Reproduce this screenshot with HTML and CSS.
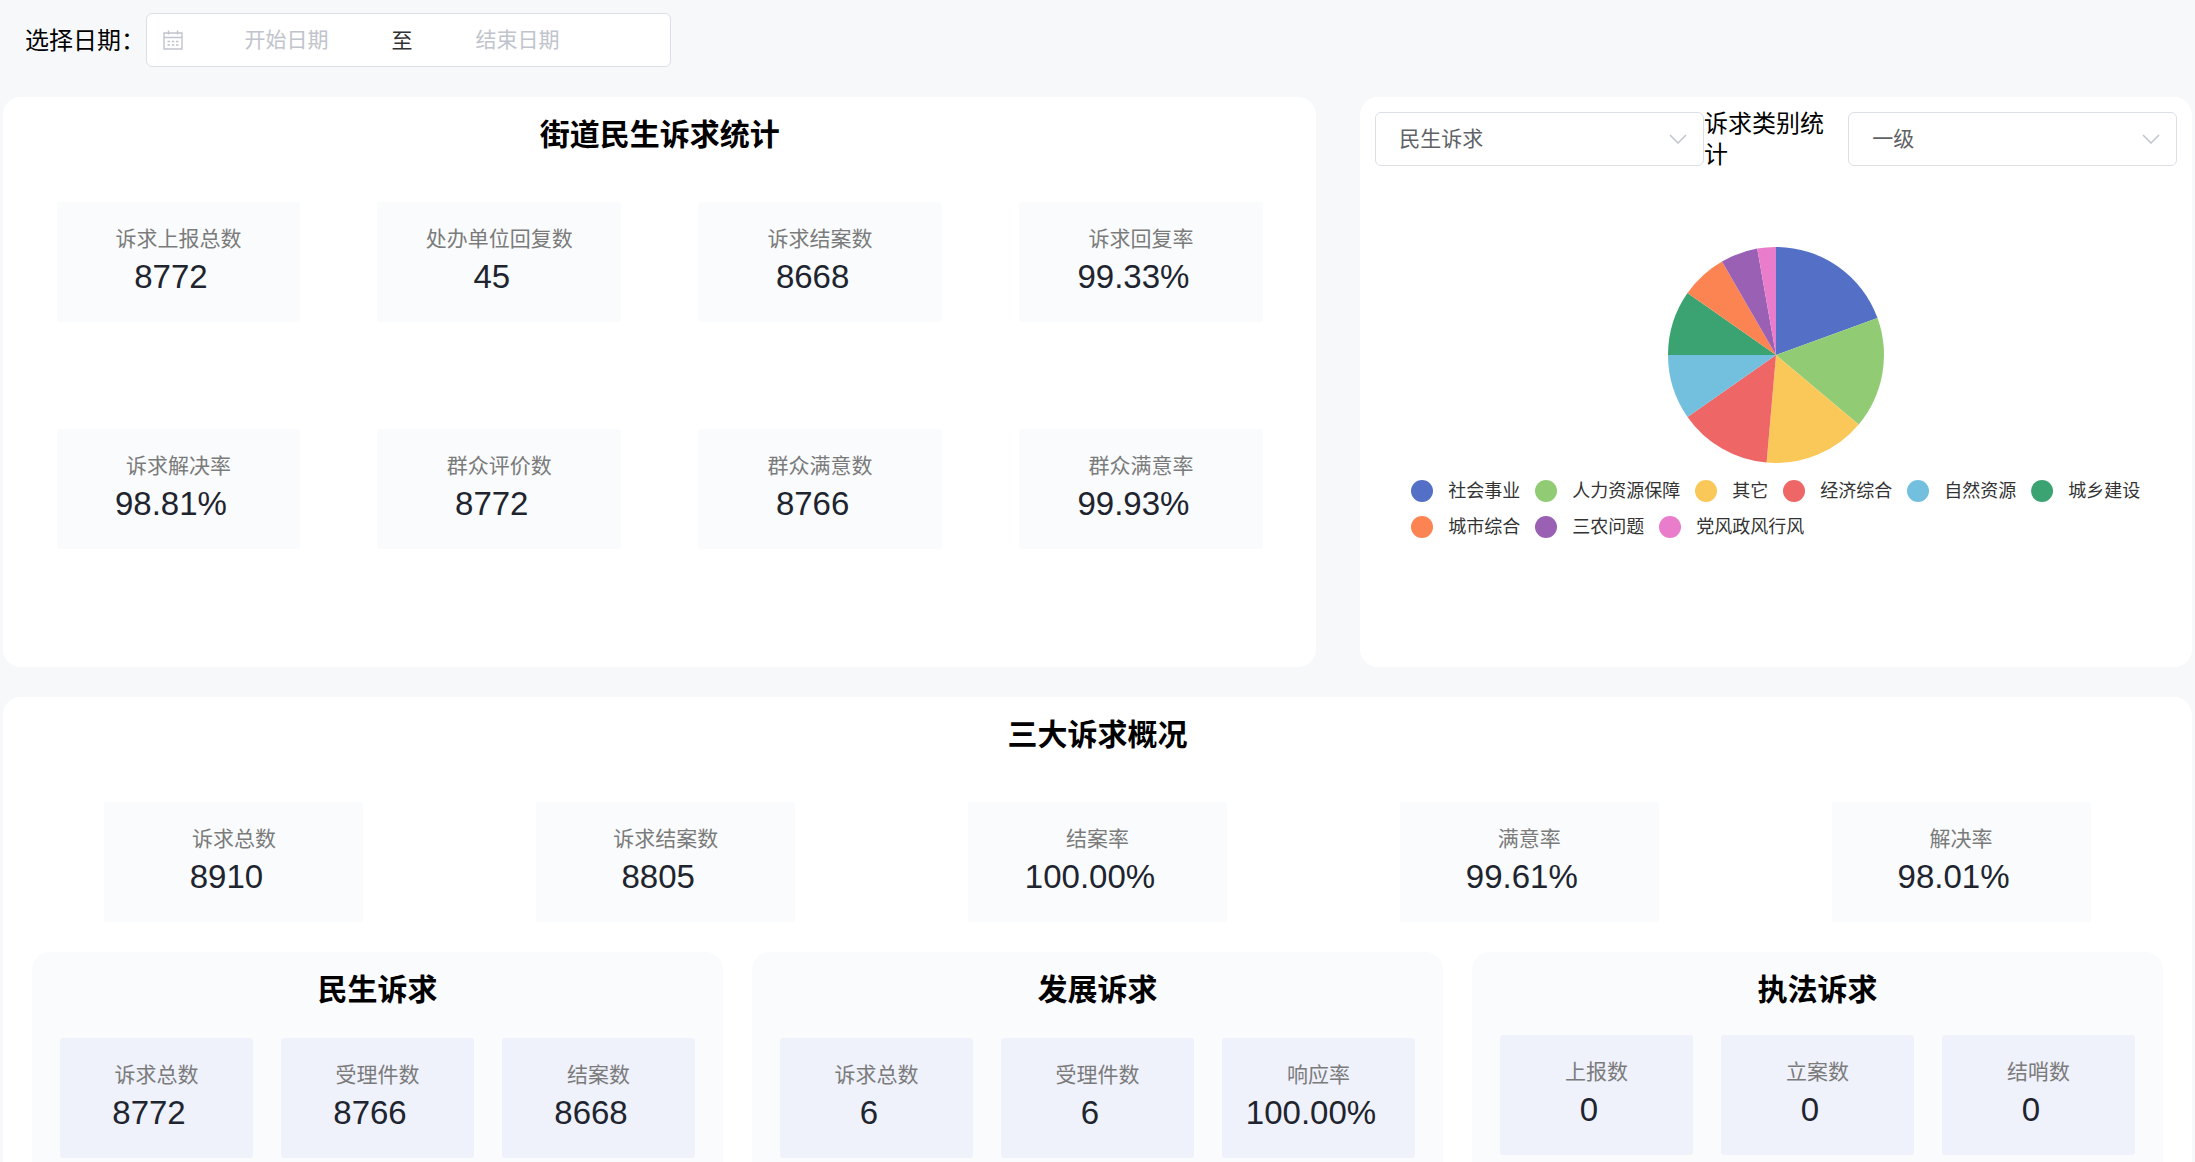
FILE: index.html
```
<!DOCTYPE html>
<html lang="zh-CN">
<head>
  <meta charset="UTF-8">
  <title>诉求统计</title>
  <link rel="stylesheet" href="styles.css">
</head>
<body>
  <div class="toolbar">
    <label for="startDate">选择日期：</label>
    <div class="date-range">
      <svg class="date-icon" viewBox="0 0 22 22" fill="none" stroke="currentColor" stroke-width="1.4">
        <path d="M2 4h18v16H2zM2 8.5h18M6.5 1.5v4M15.5 1.5v4"/>
        <path d="M5.5 12.5h2.5M9.8 12.5h2.5M14 12.5h2.5M5.5 16h2.5M9.8 16h2.5M14 16h2.5"/>
      </svg>
      <input type="text" id="startDate" placeholder="开始日期">
      <span class="date-sep">至</span>
      <input type="text" id="endDate" placeholder="结束日期" aria-label="结束日期">
    </div>
  </div>

  <div class="top-row">
    <section class="panel street">
      <h2>街道民生诉求统计</h2>
      <div class="cards cards-4">
        <div class="card"><p class="name">诉求上报总数</p><p class="num">8772</p></div>
        <div class="card"><p class="name">处办单位回复数</p><p class="num">45</p></div>
        <div class="card"><p class="name">诉求结案数</p><p class="num">8668</p></div>
        <div class="card"><p class="name">诉求回复率</p><p class="num">99.33%</p></div>
        <div class="card"><p class="name">诉求解决率</p><p class="num">98.81%</p></div>
        <div class="card"><p class="name">群众评价数</p><p class="num">8772</p></div>
        <div class="card"><p class="name">群众满意数</p><p class="num">8766</p></div>
        <div class="card"><p class="name">群众满意率</p><p class="num">99.93%</p></div>
      </div>
    </section>

    <section class="panel category">
      <div class="category-head">
        <div class="select">
          <select id="typeSelect" aria-label="诉求类型">
            <option>民生诉求</option>
            <option>发展诉求</option>
            <option>执法诉求</option>
          </select>
          <svg class="arrow" viewBox="0 0 18 10"><path d="M1 1l8 8 8-8"/></svg>
        </div>
        <span class="category-title">诉求类别统计</span>
        <div class="select">
          <select id="levelSelect" aria-label="级别">
            <option>一级</option>
            <option>二级</option>
          </select>
          <svg class="arrow" viewBox="0 0 18 10"><path d="M1 1l8 8 8-8"/></svg>
        </div>
      </div>

      <svg class="pie" viewBox="-108 -108 216 216">
        <path class="c1" d="M0 0V-108A108 108 0 0 1 101.5 -36.9Z"/>
        <path class="c2" d="M0 0L101.5 -36.9A108 108 0 0 1 82.7 69.4Z"/>
        <path class="c3" d="M0 0L82.7 69.4A108 108 0 0 1 -9.4 107.6Z"/>
        <path class="c4" d="M0 0L-9.4 107.6A108 108 0 0 1 -88.5 61.9Z"/>
        <path class="c5" d="M0 0L-88.5 61.9A108 108 0 0 1 -108 0Z"/>
        <path class="c6" d="M0 0H-108A108 108 0 0 1 -88.5 -61.9Z"/>
        <path class="c7" d="M0 0L-88.5 -61.9A108 108 0 0 1 -54 -93.5Z"/>
        <path class="c8" d="M0 0L-54 -93.5A108 108 0 0 1 -18.8 -106.4Z"/>
        <path class="c9" d="M0 0L-18.8 -106.4A108 108 0 0 1 0 -108Z"/>
      </svg>

      <ul class="legend">
        <li><i class="c1"></i>社会事业</li>
        <li><i class="c2"></i>人力资源保障</li>
        <li><i class="c3"></i>其它</li>
        <li><i class="c4"></i>经济综合</li>
        <li><i class="c5"></i>自然资源</li>
        <li><i class="c6"></i>城乡建设</li>
        <li><i class="c7"></i>城市综合</li>
        <li><i class="c8"></i>三农问题</li>
        <li><i class="c9"></i>党风政风行风</li>
      </ul>
    </section>
  </div>

  <section class="panel overview">
    <h2>三大诉求概况</h2>
    <div class="cards cards-5">
      <div class="card"><p class="name">诉求总数</p><p class="num">8910</p></div>
      <div class="card"><p class="name">诉求结案数</p><p class="num">8805</p></div>
      <div class="card"><p class="name">结案率</p><p class="num">100.00%</p></div>
      <div class="card"><p class="name">满意率</p><p class="num">99.61%</p></div>
      <div class="card"><p class="name">解决率</p><p class="num">98.01%</p></div>
    </div>

    <div class="groups">
      <div class="group">
        <h2>民生诉求</h2>
        <div class="cards cards-3">
          <div class="card"><p class="name">诉求总数</p><p class="num">8772</p></div>
          <div class="card"><p class="name">受理件数</p><p class="num">8766</p></div>
          <div class="card"><p class="name">结案数</p><p class="num">8668</p></div>
        </div>
      </div>
      <div class="group">
        <h2>发展诉求</h2>
        <div class="cards cards-3">
          <div class="card"><p class="name">诉求总数</p><p class="num">6</p></div>
          <div class="card"><p class="name">受理件数</p><p class="num">6</p></div>
          <div class="card"><p class="name">响应率</p><p class="num">100.00%</p></div>
        </div>
      </div>
      <div class="group law">
        <h2>执法诉求</h2>
        <div class="cards cards-3">
          <div class="card"><p class="name">上报数</p><p class="num">0</p></div>
          <div class="card"><p class="name">立案数</p><p class="num">0</p></div>
          <div class="card"><p class="name">结哨数</p><p class="num">0</p></div>
        </div>
      </div>
    </div>
  </section>
</body>
</html>
```
FILE: styles.css
```
* {
  box-sizing: border-box;
}

body {
  margin: 0;
  padding: 13px 3px 0;
  background: #f7f8fa;
  color: #000;
  font-family: "Liberation Sans", "Noto Sans CJK SC", sans-serif;
  font-size: 24px;
}

h2, p, ul {
  margin: 0;
  padding: 0;
}

h2 {
  font-size: 30px;
  line-height: 45px;
  font-weight: bold;
  text-align: center;
}

input, select {
  font-family: inherit;
  font-size: 21px;
  color: #606266;
}

/* date filter */
.toolbar {
  display: flex;
  align-items: center;
  gap: 1px;
  padding-left: 22px;
  margin-bottom: 30px;
}

.toolbar label {
  padding-bottom: 4px;
}

.date-range {
  display: flex;
  align-items: center;
  width: 525px;
  height: 54px;
  padding: 0 15px;
  background: #fff;
  border: 1px solid #dcdfe6;
  border-radius: 6px;
}

.date-icon {
  width: 22px;
  height: 22px;
  color: #c0c4cc;
}

.date-range input {
  width: 205px;
  height: 40px;
  padding: 0;
  border: none;
  outline: none;
  background: none;
  text-align: center;
}

.date-range input::placeholder {
  color: #c0c4cc;
}

.date-sep {
  width: 26px;
  padding-bottom: 2px;
  font-size: 21px;
  color: #303133;
  text-align: center;
}

.panel {
  padding-top: 15px;
  background: #fff;
  border-radius: 18px;
}

.top-row {
  display: flex;
  justify-content: space-between;
  margin-bottom: 30px;
}

.street {
  width: 60%;
  min-height: 570px;
}

.category {
  width: 38%;
}

/* number cards */
.cards {
  display: grid;
  justify-items: center;
}

.cards-4 {
  grid-template-columns: repeat(4, 1fr);
  row-gap: 107px;
  padding: 45px 15px;
}

.cards-4 .card {
  width: 76%;
}

.cards-5 {
  grid-template-columns: repeat(5, 1fr);
  padding: 45px 15px 30px;
}

.cards-5 .card {
  width: 60%;
}

.cards-3 {
  grid-template-columns: repeat(3, 1fr);
  gap: 28px;
  padding: 26px 28px;
}

.cards-3 .card {
  width: 100%;
  background: #eff1fb;
}

.law .cards-3 {
  padding-top: 23px;
}

.card {
  height: 120px;
  padding-top: 22px;
  background: #fafbfd;
  border-radius: 3px;
  text-align: center;
}

.name {
  font-size: 21px;
  line-height: 30px;
  color: #7b7b7b;
}

.num {
  margin-right: 15px;
  font-size: 33px;
  line-height: 45px;
  color: #20242e;
}

/* category chart */
.category-head {
  display: flex;
  align-items: center;
  height: 54px;
  padding: 0 15px;
}

.select {
  position: relative;
  flex: 0 0 41%;
}

.select select {
  width: 100%;
  height: 54px;
  padding: 0 45px 2px 23px;
  background: #fff;
  border: 1px solid #dcdfe6;
  border-radius: 6px;
  appearance: none;
  outline: none;
}

.arrow {
  position: absolute;
  top: 22px;
  right: 17px;
  width: 18px;
  height: 10px;
  fill: none;
  stroke: #c0c4cc;
  stroke-width: 1.5;
  pointer-events: none;
}

.category-title {
  flex: 1;
  padding-right: 15px;
  line-height: 31px;
}

.pie {
  display: block;
  width: 216px;
  height: 216px;
  margin: 81px auto 0;
}

.legend {
  display: flex;
  flex-wrap: wrap;
  gap: 0 15px;
  padding: 10px 36px 0 51px;
  list-style: none;
}

.legend li {
  display: flex;
  align-items: center;
  gap: 15px;
  font-size: 18px;
  line-height: 36px;
  color: #333;
}

.legend i {
  width: 22px;
  height: 22px;
  border-radius: 50%;
}

.c1 { fill: #5470c6; background: #5470c6; }
.c2 { fill: #91cc75; background: #91cc75; }
.c3 { fill: #fac858; background: #fac858; }
.c4 { fill: #ee6666; background: #ee6666; }
.c5 { fill: #73c0de; background: #73c0de; }
.c6 { fill: #3ba272; background: #3ba272; }
.c7 { fill: #fc8452; background: #fc8452; }
.c8 { fill: #9a60b4; background: #9a60b4; }
.c9 { fill: #ea7ccc; background: #ea7ccc; }

/* three groups */
.overview {
  padding-bottom: 30px;
}

.groups {
  display: grid;
  grid-template-columns: repeat(3, 1fr);
  gap: 29px;
  padding: 0 29px;
}

.group {
  padding-top: 15px;
  background: #fafbfd;
  border-radius: 18px;
}
```
